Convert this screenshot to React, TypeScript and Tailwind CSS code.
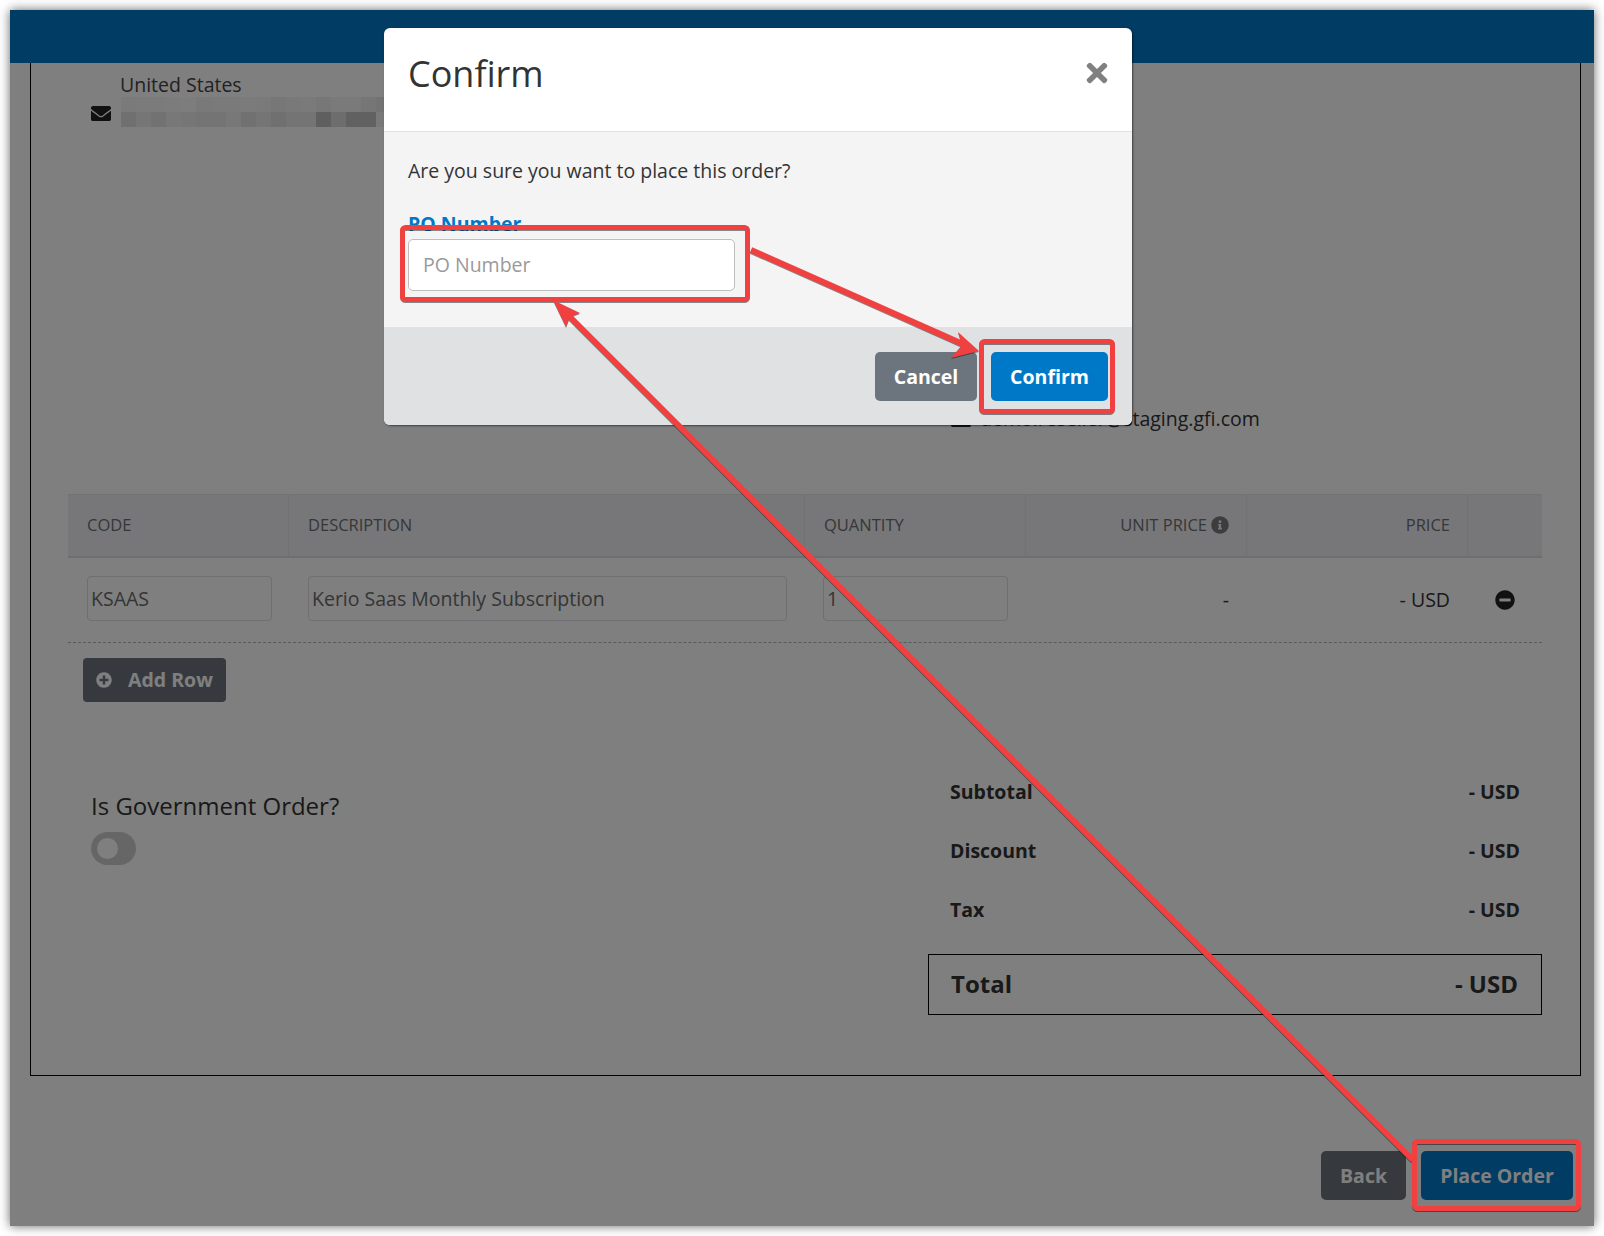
import React from "react";
import { FaEnvelope, FaInfoCircle, FaMinusCircle, FaPlusCircle, FaTimes } from "react-icons/fa";

const font = "font-['Open_Sans',sans-serif]";

const PIXELS = [
  [122,123,123,124,125,121,122,122,123,122,119,121,122,119,122,122,118,115],
  [112,118,114,120,118,116,116,120,113,117,112,116,116,95,109,97,97,121],
];

const COLS = "grid grid-cols-[221px_516px_221px_221px_221px_74px]";

function HeadCell({ children, right }: { children?: React.ReactNode; right?: boolean }) {
  return (
    <div className={`flex h-full items-center border-r border-[#e3e4e8] pb-[1px] pl-[19px] pr-[17px] text-[16.5px] text-[#6d6e70] last:border-r-0 ${right ? "justify-end" : ""}`}>
      {children}
    </div>
  );
}

function Field({ value, className }: { value: string; className: string }) {
  return (
    <div className={`flex h-[45px] items-center rounded-[4px] border border-[#dcdde6] pl-[3px] pt-[2px] text-[19.5px] text-[#6a6a6a] ${className}`}>
      {value}
    </div>
  );
}

function TotalRow({ label, value }: { label: string; value: string }) {
  return (
    <div className="flex h-[59px] items-center justify-between pl-[22px] pr-[22px] text-[19.5px] font-bold text-[#333]">
      <span>{label}</span>
      <span>{value}</span>
    </div>
  );
}

export default function App() {
  return (
    <div className={`relative h-[1236px] w-[1604px] overflow-hidden bg-white p-[10px] ${font}`}>
      <div className="relative flex h-[1216px] w-[1584px] flex-col overflow-hidden bg-white shadow-[0_0_10px_rgba(0,0,0,0.6)]">
        <div className="h-[53px] shrink-0 bg-[#0078c8]" />
        <div className="ml-[20px] mr-[13px] h-[1013px] shrink-0 border-x border-b border-black">
          <div className="flex h-[431px]">
            <div className="ml-[60px] w-[820px] pt-[9px]">
              <div className="flex h-[26px] items-center pl-[29px] text-[19.5px] leading-none text-[#444]">United States</div>
              <div className="-mt-[1px] flex items-center">
                <FaEnvelope className="mt-[2px] h-[21px] w-[20px] text-[#222]" />
                <div className="ml-[10px] flex flex-col">
                  {PIXELS.map((row, i) => (
                    <div key={i} className="flex">
                      {row.map((v, j) => (
                        <div key={j} className="h-[15px] w-[15px]" style={{ backgroundColor: `rgb(${v * 2},${v * 2},${v * 2})` }} />
                      ))}
                    </div>
                  ))}
                </div>
              </div>
            </div>
            <div className="ml-[40px] flex items-start pt-[343px]">
              <FaEnvelope className="mt-[3px] h-[21px] w-[20px] text-[#222]" />
              <span className="ml-[9px] text-[19.5px] leading-[26px] text-[#333]">demo.reseller@staging.gfi.com</span>
            </div>
          </div>

          <div className="ml-[37px] w-[1474px]">
            <div className={`${COLS} h-[64px] items-center border-y-2 border-t-[1px] border-[#e6e7ea] border-b-[#dcdde0] bg-[#eeeff3]`}>
              <HeadCell>CODE</HeadCell>
              <HeadCell>DESCRIPTION</HeadCell>
              <HeadCell>QUANTITY</HeadCell>
              <HeadCell right>
                UNIT PRICE
                <FaInfoCircle className="ml-[4px] h-[18px] w-[18px] text-[#7a7b7d]" />
              </HeadCell>
              <HeadCell right>PRICE</HeadCell>
              <HeadCell />
            </div>
            <div className={`${COLS} h-[85px] items-center border-b border-dashed border-[#b5b5b5] pb-[2px]`}>
              <div className="-mt-[2px] px-[19px]"><Field value="KSAAS" className="w-[185px]" /></div>
              <div className="-mt-[2px] px-[19px]"><Field value="Kerio Saas Monthly Subscription" className="w-[479px]" /></div>
              <div className="-mt-[2px] pl-[18px]"><Field value="1" className="w-[185px]" /></div>
              <div className="mt-[2px] pr-[18px] text-right text-[19.5px] text-[#333]">-</div>
              <div className="mt-[2px] pr-[18px] text-right text-[19.5px] text-[#333]">- USD</div>
              <div className="mt-[2px] flex justify-center"><FaMinusCircle className="h-[20px] w-[20px] text-[#222]" /></div>
            </div>
            <button className="ml-[15px] mt-[15px] flex h-[44px] w-[143px] items-center rounded-[4px] bg-[#6c757d] pl-[13px] text-[19.5px] font-bold text-white">
              <FaPlusCircle className="h-[16px] w-[16px] text-white" />
              <span className="ml-[16px]">Add Row</span>
            </button>

            <div className="mt-[60px] flex items-start justify-between">
              <div className="ml-[23px] mt-[27px]">
                <div className="text-[24px] leading-[33px] text-[#333]">Is Government Order?</div>
                <div className="mt-[10px] flex h-[33px] w-[45px] items-center rounded-full bg-[#ccc] pl-[6px]">
                  <div className="h-[21px] w-[21px] rounded-full bg-white" />
                </div>
              </div>
              <div className="w-[614px]">
                <TotalRow label="Subtotal" value="- USD" />
                <TotalRow label="Discount" value="- USD" />
                <TotalRow label="Tax" value="- USD" />
                <div className="mt-[15px] flex h-[61px] items-center justify-between border border-black pb-[2px] pl-[22px] pr-[23px] text-[24px] font-bold text-[#333]">
                  <span>Total</span>
                  <span>- USD</span>
                </div>
              </div>
            </div>
          </div>
        </div>
        <div className="mr-[21px] mt-[75px] flex justify-end gap-[15px]">
          <button className="h-[49px] w-[85px] rounded-[5px] bg-[#6c757d] text-[19.5px] font-bold text-white">Back</button>
          <button className="h-[49px] w-[152px] rounded-[5px] bg-[#0078c8] text-[19.5px] font-bold text-white">Place Order</button>
        </div>

        <div className="absolute inset-0 bg-black/50" />

        <div className="absolute left-[374px] top-[18px] w-[748px] overflow-hidden rounded-[6px] bg-white shadow-[1px_1px_2px_rgba(0,0,0,0.5)]">
          <div className="flex h-[104px] items-start justify-between border-b border-[#e2e2e2] pl-[24px] pr-[23px]">
            <span className="mt-[21px] text-[36px] leading-[49px] text-[#333]">Confirm</span>
            <FaTimes className="mt-[30px] h-[30px] w-[24px] text-[#808080]" />
          </div>
          <div className="h-[195px] bg-[#f4f4f4] px-[24px] pt-[25px]">
            <div className="text-[19.5px] leading-[27px] text-[#333]">Are you sure you want to place this order?</div>
            <div className="mt-[26px] text-[19.5px] font-bold leading-[27px] text-[#0078c8]">PO Number</div>
            <div className="mt-[2px] flex h-[52px] w-[327px] items-center rounded-[5px] border border-[#bdbdbd] bg-white pl-[14px] text-[19.5px] text-[#9a9a9a]">PO Number</div>
          </div>
          <div className="flex h-[98px] justify-end gap-[14px] bg-[#e0e1e3] pr-[24px] pt-[25px]">
            <button className="h-[49px] w-[102px] rounded-[5px] bg-[#6c757d] text-[19.5px] font-bold text-white">Cancel</button>
            <button className="h-[49px] w-[117px] rounded-[5px] bg-[#0078c8] text-[19.5px] font-bold text-white">Confirm</button>
          </div>
        </div>
      </div>

      <svg className="pointer-events-none absolute inset-0 drop-shadow-[0_1px_0.5px_rgba(0,0,0,0.45)]" width="1604" height="1236" viewBox="0 0 1604 1236" fill="none">
        <g stroke="#f04040" strokeWidth="5">
          <rect x="402.5" y="227.5" width="345" height="72" rx="3" />
          <rect x="981.5" y="341.5" width="131" height="70" rx="3" />
          <rect x="1414.5" y="1141.5" width="164" height="67" rx="3" />
        </g>
        <g stroke="#f04040" strokeWidth="6">
          <line x1="751" y1="250" x2="965" y2="345" />
          <line x1="566" y1="313" x2="1413" y2="1160" />
        </g>
        <polygon points="553,300 580,313 570,317 566,327" fill="#f04040" />
        <polygon points="979,351 958,332 962,345 951,358" fill="#f04040" />
      </svg>
    </div>
  );
}
